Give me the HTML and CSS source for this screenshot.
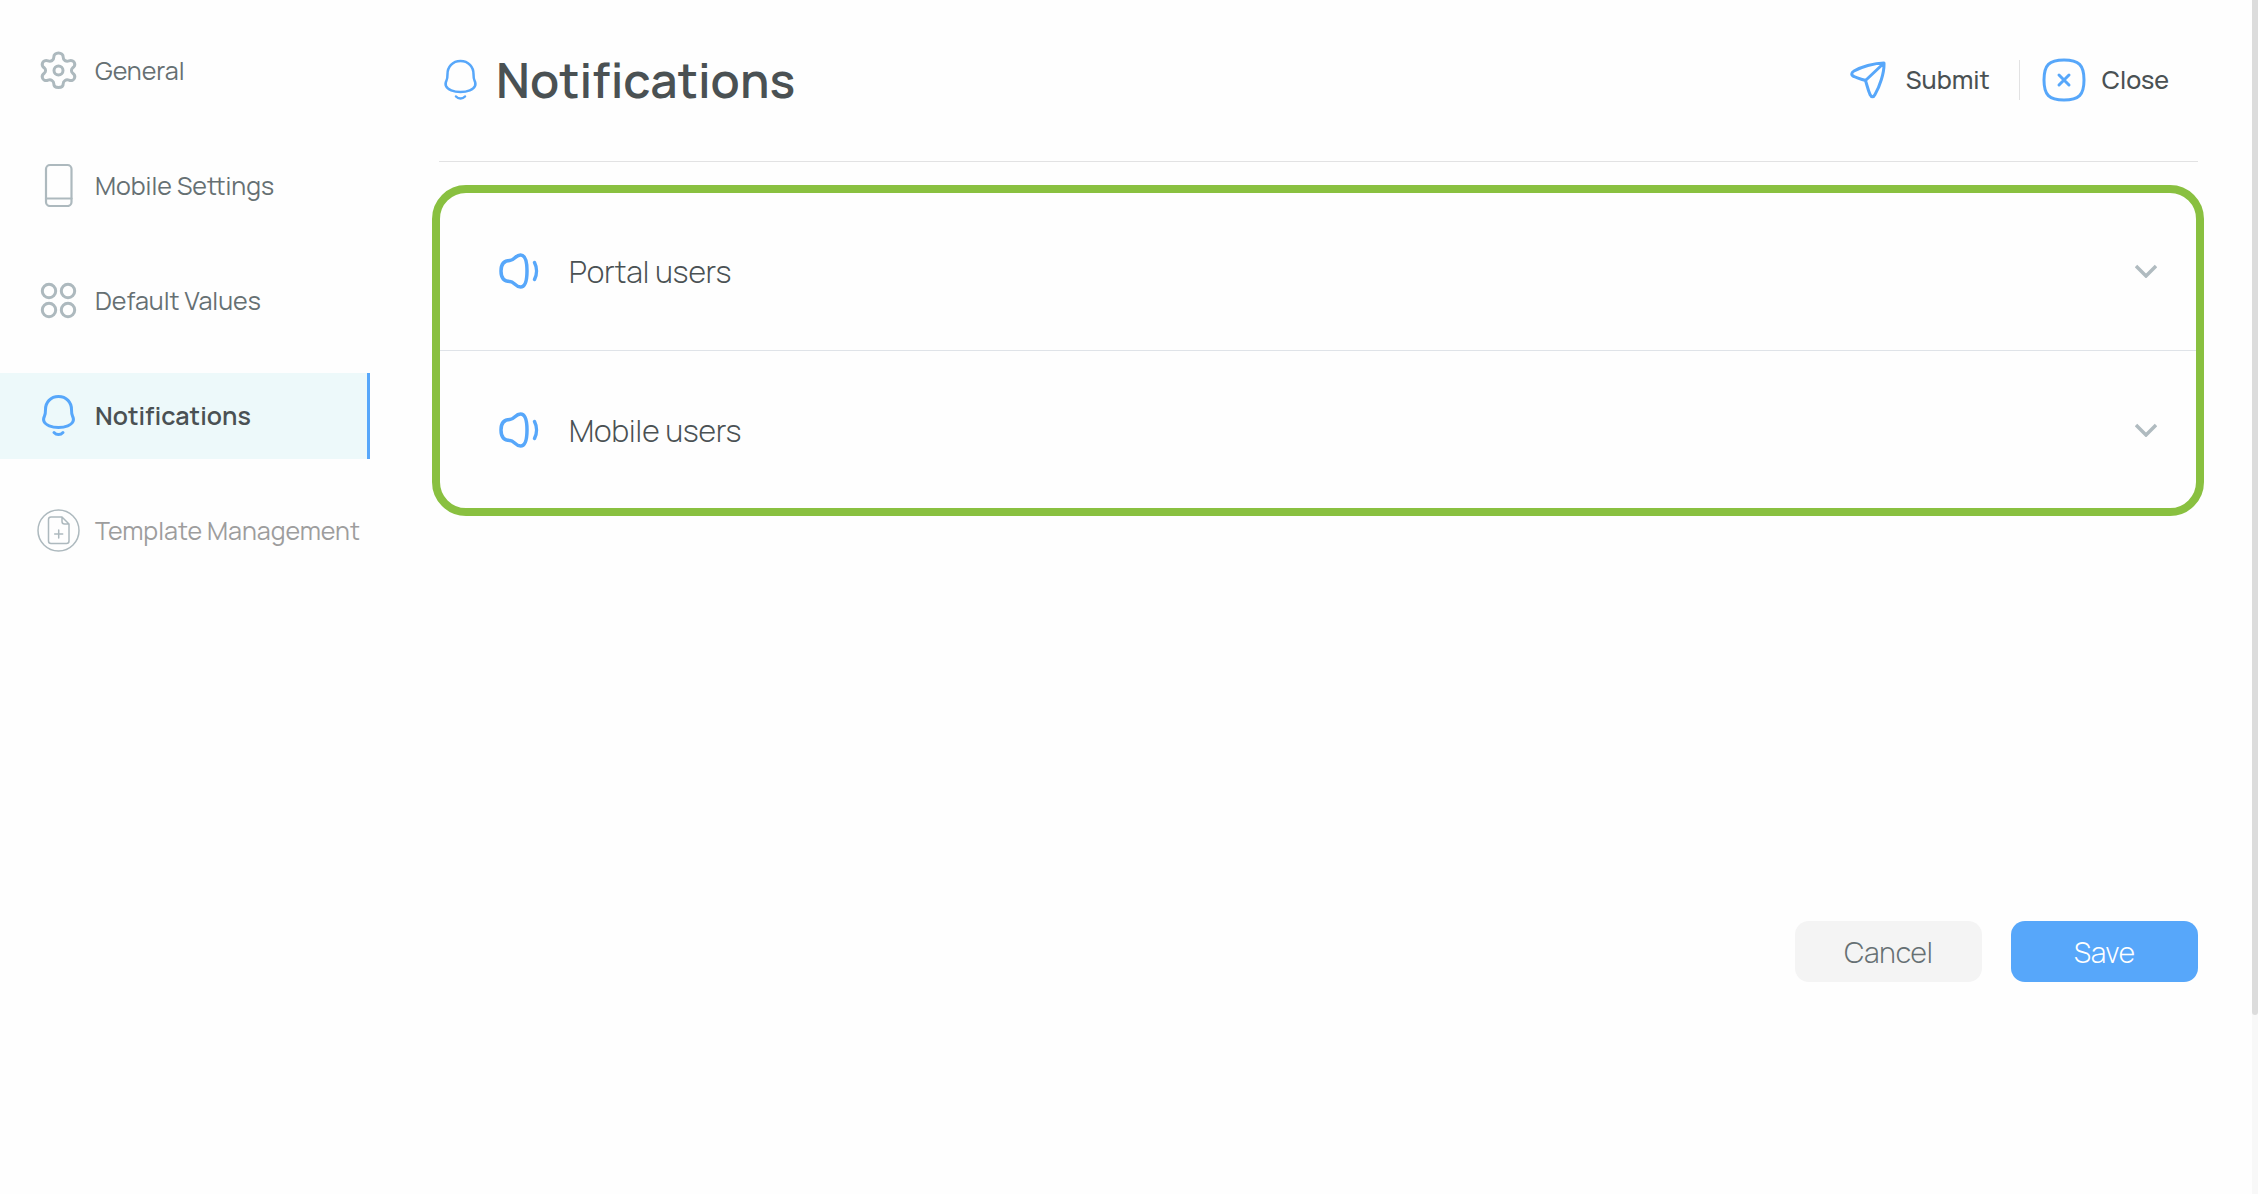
FILE: index.html
```html
<!DOCTYPE html>
<html lang="en">
<head>
<meta charset="utf-8">
<title>Notifications</title>
<meta name="viewport" content="width=device-width, initial-scale=1">
<link rel="stylesheet" href="styles.css">
</head>
<body>
<div class="app">
  <nav class="sidebar" aria-label="Settings">
    <a class="nav-item" href="#general">
      <svg class="icon" viewBox="0 0 44 44"><path d="M21.500 5C24.300 5 26.200 6.800 26.200 9.200C26.200 12.400 29.200 13.900 31.900 12.900C34.500 11.900 36.900 12.900 37.600 15.200C38.400 17.700 37.200 18.900 35.500 20.100C34.100 21.300 34.100 23.700 35.500 24.900C37.200 26.100 38.400 27.500 37.600 29.900C36.900 32.200 34.500 33.200 31.900 32.200C29.200 31.100 26.200 32.700 26.200 35.800C26.200 38.200 24.300 39.500 21.500 39.500C18.700 39.500 16.800 38.200 16.800 35.800C16.800 32.700 13.800 31.100 11.100 32.200C8.500 33.200 6.100 32.200 5.400 29.900C4.600 27.500 5.800 26.100 7.500 24.900C8.900 23.700 8.900 21.300 7.500 20.100C5.800 18.900 4.600 17.700 5.400 15.200C6.100 12.900 8.500 11.900 11.100 12.900C13.800 13.900 16.800 12.400 16.800 9.200C16.800 6.800 18.700 5 21.500 5Z"/><circle cx="21.500" cy="22.500" r="4.500"/></svg>
      <span>General</span>
    </a>
    <a class="nav-item" href="#mobile">
      <svg class="icon thin" viewBox="0 0 44 44"><rect x="9" y="2" width="25.500" height="41" rx="4"/><path d="M9 35.500H34.500"/></svg>
      <span>Mobile Settings</span>
    </a>
    <a class="nav-item" href="#defaults">
      <svg class="icon" viewBox="0 0 44 44"><circle cx="12" cy="13" r="6.700"/><circle cx="31" cy="13" r="6.700"/><circle cx="12" cy="32" r="6.700"/><circle cx="31" cy="32" r="6.700"/></svg>
      <span>Default Values</span>
    </a>
    <a class="nav-item active" href="#notifications" aria-current="page">
      <svg class="icon" viewBox="0 0 44 44"><path d="M21.500 3.500C13.500 3.500 8.500 9.500 8.500 16.500C8.500 19.500 8.500 21 7.500 23C6.500 25 6 26.500 7 28.500C8.500 32 14.500 34.500 21.500 34.500C28.500 34.500 34.500 32 36 28.500C37 26.500 36.500 25 35.500 23C34.500 21 34.500 19.500 34.500 16.500C34.500 9.500 29.500 3.500 21.500 3.500Z"/><path d="M17 39.500C19.500 42.200 23.500 42.200 26 39.500"/></svg>
      <span>Notifications</span>
    </a>
    <a class="nav-item disabled" href="#templates" aria-disabled="true">
      <svg class="icon fine" viewBox="0 0 44 44"><circle cx="21.500" cy="22.500" r="20.500"/><path d="M25 9H14Q11.500 9 11.500 11.500V33Q11.500 35.500 14 35.500H29.500Q32 35.500 32 33V16ZM25 9V13.500Q25 16 27.500 16H32M21.700 22V30M17.700 26H25.700"/></svg>
      <span>Template Management</span>
    </a>
  </nav>

  <main class="main">
    <header class="header">
      <svg class="icon medium blue" viewBox="0 0 44 44"><path d="M21.500 3C13.500 3 8.500 9 8.500 16C8.500 19 8.500 20.500 7.500 22.500C6.500 24.500 6 26 7 28C8.500 31.500 14.500 34 21.500 34C28.500 34 34.500 31.500 36 28C37 26 36.500 24.500 35.500 22.500C34.500 20.500 34.500 19 34.500 16C34.500 9 29.500 3 21.500 3Z"/><path d="M17 38.500C19.500 41.200 23.500 41.200 26 38.500"/></svg>
      <h1 class="title">Notifications</h1>
      <button class="action" type="button">
        <svg class="icon blue" viewBox="0 0 44 44"><path d="M38 5C28 5 15 9 8 13C5 14.800 5 17.200 8 18.500C12 20.500 16 21.300 19.500 22.500C21 27 22 32 24 36.500C25.500 39.500 27.500 39.500 29 36.500C34 28 38 15 38 7ZM19.500 22.500L37.500 5.500"/></svg>
        <span>Submit</span>
      </button>
      <button class="action" type="button">
        <svg class="icon blue" viewBox="0 0 44 44"><path d="M22 2C37 2 42 7 42 22C42 37 37 42 22 42C7 42 2 37 2 22C2 7 7 2 22 2Z"/><path d="M17 17L27 27M27 17L17 27"/></svg>
        <span>Close</span>
      </button>
    </header>

    <section class="panel" aria-label="Notification groups">
      <button class="row" type="button" aria-expanded="false">
        <svg class="icon bold blue" viewBox="0 0 44 44"><path d="M13 11.500C17 11.500 18.500 6 23.500 6C28.500 6 30 12 30 22C30 32 28.500 38 23.500 38C18.500 38 17 32.500 13 32.500C7 32.500 4 29 4 22C4 15 7 11.500 13 11.500Z"/><path d="M37.500 13.500C40.100 18.500 40.100 25.500 37.500 30.500"/></svg>
        <span>Portal users</span>
        <svg class="chevron" viewBox="0 0 22 14"><path d="M1 2L11 12L21 2"/></svg>
      </button>
      <button class="row" type="button" aria-expanded="false">
        <svg class="icon bold blue" viewBox="0 0 44 44"><path d="M13 11.500C17 11.500 18.500 6 23.500 6C28.500 6 30 12 30 22C30 32 28.500 38 23.500 38C18.500 38 17 32.500 13 32.500C7 32.500 4 29 4 22C4 15 7 11.500 13 11.500Z"/><path d="M37.500 13.500C40.100 18.500 40.100 25.500 37.500 30.500"/></svg>
        <span>Mobile users</span>
        <svg class="chevron" viewBox="0 0 22 14"><path d="M1 2L11 12L21 2"/></svg>
      </button>
    </section>

    <footer class="footer">
      <button class="btn" type="button">Cancel</button>
      <button class="btn primary" type="button">Save</button>
    </footer>
  </main>

  <div class="rail"><div class="thumb"></div></div>
</div>
</body>
</html>
```
FILE: styles.css
```css
* { box-sizing: border-box; }

body {
  margin: 0;
  background: #fefefe;
  color: #4a5153;
  font-family: "Manrope", Inter, "Liberation Sans", sans-serif;
}

button {
  font: inherit;
  color: inherit;
  background: none;
  border: 0;
  padding: 0;
  cursor: pointer;
}

.app {
  display: grid;
  grid-template-columns: 370px 1fr 6px;
  min-height: 100vh;
}

.icon {
  flex: none;
  width: 44px;
  height: 44px;
  fill: none;
  stroke: currentColor;
  stroke-width: 3;
  stroke-linecap: round;
  stroke-linejoin: round;
}
.bold { stroke-width: 3.5; }
.medium { stroke-width: 2.5; }
.thin { stroke-width: 2.2; }
.fine { stroke-width: 1.5; }
.blue { color: #57a7fa; }

/* Sidebar */
.sidebar {
  display: flex;
  flex-direction: column;
  gap: 29px;
  padding-top: 28px;
}
.nav-item {
  display: flex;
  align-items: center;
  gap: 14px;
  height: 86px;
  padding: 0 0 2px 37px;
  font-size: 25px;
  font-weight: 400;
  color: #667073;
  text-decoration: none;
  white-space: nowrap;
}
.nav-item .icon { color: #adb9be; }
.nav-item.active {
  background: #edf9fa;
  border-right: 3px solid #57a7fa;
  color: #4a5153;
  font-weight: 600;
}
.nav-item.active .icon { color: #57a7fa; }
.nav-item.disabled { color: #9d9d9d; }

/* Main column */
.main {
  display: flex;
  flex-direction: column;
  padding: 0 54px 40px 69px;
}
.header {
  display: flex;
  align-items: center;
  height: 162px;
  padding: 0 29px 2px 0;
  border-bottom: 1px solid #e2e2e3;
}
.title {
  flex: 1;
  margin: 0 0 0 13px;
  font-size: 48px;
  font-weight: 600;
}
.action {
  display: flex;
  align-items: center;
  gap: 16px;
  height: 40px;
  font-size: 25px;
  font-weight: 500;
}
.action + .action {
  margin-left: 29px;
  padding-left: 22px;
  border-left: 1px solid #e2e2e3;
}

/* Accordion with a highlight ring over its edge */
.panel {
  position: relative;
  margin-top: 29px;
  border: 1px solid #dfe3e8;
  border-radius: 14px;
}
.panel::after {
  content: "";
  position: absolute;
  inset: -7px -7px -7px -8px;
  border: 8px solid #89c040;
  border-radius: 34px;
  pointer-events: none;
}
.row {
  display: flex;
  align-items: center;
  gap: 28px;
  width: 100%;
  height: 158px;
  padding: 0 40px 0 57px;
  font-size: 30px;
  font-weight: 300;
}
.row + .row {
  height: 159px;
  border-top: 1px solid #dfe3e8;
}
.chevron {
  width: 22px;
  height: 14px;
  margin-left: auto;
  fill: none;
  stroke: #b0bbc0;
  stroke-width: 3.5;
}

/* Form buttons */
.footer {
  display: flex;
  justify-content: flex-end;
  gap: 29px;
  margin-top: 411px;
}
.btn {
  width: 187px;
  height: 61px;
  border-radius: 14px;
  background: #f4f4f4;
  color: #667073;
  font-size: 28px;
  font-weight: 300;
}
.btn.primary {
  background: #57a7fa;
  color: #fff;
}

/* Scroll track */
.rail { background: #f8f8f8; }
.thumb {
  height: 85vh;
  border-radius: 0 0 4px 4px;
  background: #dcdcdc;
}
```
